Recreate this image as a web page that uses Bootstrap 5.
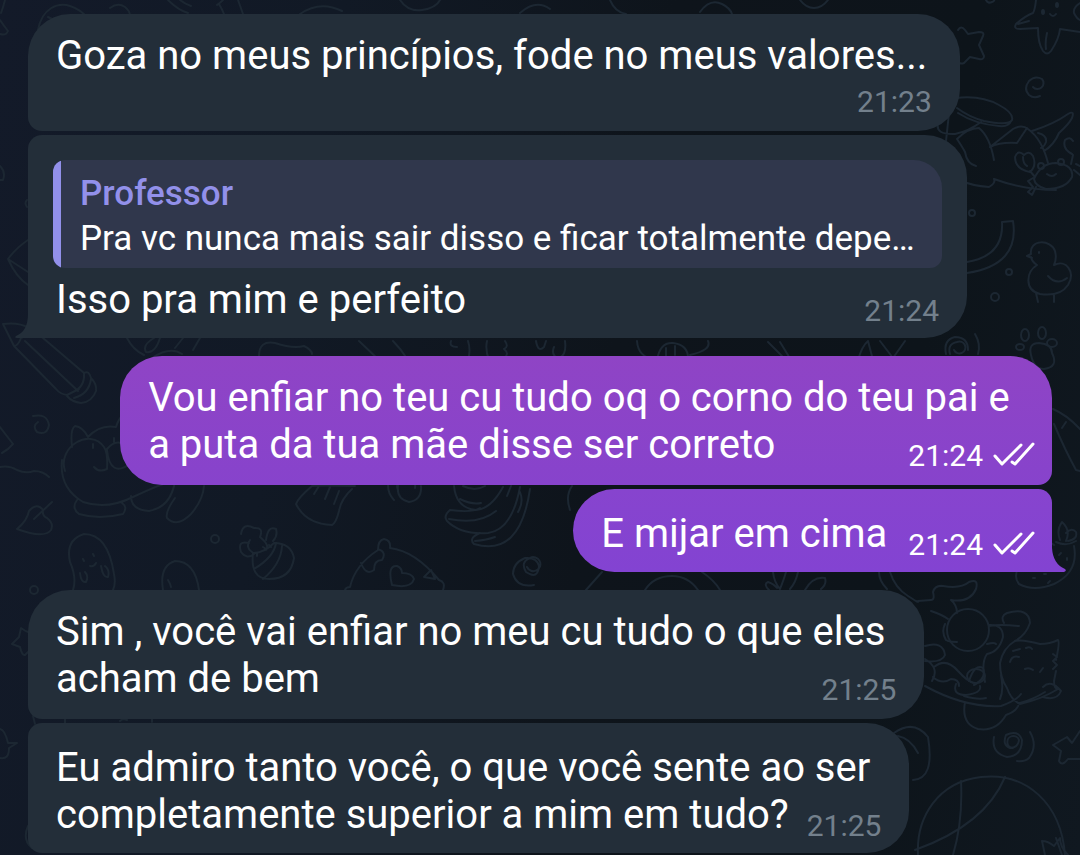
<!DOCTYPE html>
<html lang="pt-BR">
<head>
<meta charset="utf-8">
<meta name="viewport" content="width=device-width, initial-scale=1">
<title>Chat</title>
<link rel="stylesheet" href="https://cdn.jsdelivr.net/npm/bootstrap@5.3.0/dist/css/bootstrap.min.css">
<style>
body{background:linear-gradient(100deg,#131a29 0%,#111925 28%,#0e141b 55%,#0d141a 80%,#101820 100%);font-family:Roboto,"Noto Sans",sans-serif;color:#fff;font-size:40px;line-height:47px;overflow-x:hidden}
.chat{padding:14px 28px 2px}
.doodles{inset:0;z-index:0;stroke:#1c2732;stroke-width:2;fill:none;stroke-linecap:round;stroke-linejoin:round}
.bubble{z-index:1;padding:18px 28px 17px;border-radius:42px;background:#232e39}
.msg-in{border-bottom-left-radius:14px}
.msg-in.follow{border-top-left-radius:14px}
.msg-out{background:linear-gradient(#8f44c5,#8743cc);padding-right:17px;border-bottom-right-radius:14px}
.msg-out.follow{background:linear-gradient(#8744ce,#8343d2);border-top-right-radius:14px}
.low{padding-top:21px;padding-bottom:15px}
.tailed{padding-bottom:15px}
.msg-in.tailed{border-bottom-left-radius:0}
.msg-out.tailed{border-bottom-right-radius:0}
.wide{min-width:91%}
.wider{min-width:91.7%}
.near{margin-top:4px}
.apart{margin-top:18px}
.stamp{font-size:30px;line-height:35px;color:#73808c;margin:17px 0 -5px 18px}
.msg-out .stamp{color:#fff;margin-left:21px}
.stamp.own-line{margin-top:5px}
.line-end{padding-right:11px}
.msg-out .line-end{padding-right:21px}
.ticks{width:42px;height:24px;margin-left:10px;vertical-align:baseline;fill:none;stroke:#fff;stroke-width:3;stroke-linecap:round;stroke-linejoin:round}
.quote{margin:7px -3px 8px;background:#30374c;border-radius:12px 28px 12px 12px;padding:11px 22px 7px 27px;font-size:35px;line-height:45px}
.quote::before{content:"";position:absolute;left:0;top:0;bottom:0;width:8px;background:#9290ea}
.quote-name{color:#9290ea}
.tail{bottom:0;width:14px;height:24px}
.tail-l{left:-13px;fill:#232e39}
.tail-r{right:-14px;fill:#8343d2}
</style>
</head>
<body>
<div class="position-relative min-vh-100">
<svg class="doodles position-absolute w-100 h-100" viewBox="0 0 1080 855" preserveAspectRatio="xMidYMid slice" aria-hidden="true">
<!-- top edge -->
<path d="M0 20q4 6 8 11q-2 5-8 3M1 13q2-5 4-13M38 30C42 8 58 2 70 6q12 4 17 12M48 17l6 3M110 8q8-6 15-1q5 4 5 9M168 0q10 10 20 13M180 0q5 4 11 6M217 5q4-3 6-5M219 4q3 5 5 10M238 0l5 14"/>
<path d="M300 14q20-14 42-3M400 0q8 12 22 10q14-2 18-10M520 13q16-14 30-4M610 0q5 12 16 14M700 12q10-14 22-8q8 4 10 10M800 0q6 8 14 8t14-8"/>
<path d="M986 0q2 4 6 2q3-1 2-3"/>
<!-- starfish -->
<path d="M1036 0q-1 10-3 13q-8 3-17 11q-3 5 4 5l18-1q0 16 5 23q4 5 8 0q8-12 9-22l20 3M1018 24l11-3M1047 33q-2 9-1 16M1080 3q-7 4-6 10q3 6 6 7M1050 14q3 4 6 0"/>
<ellipse cx="1043" cy="12" rx="1" ry="2"/><ellipse cx="1057" cy="5" rx="1" ry="2"/>
<path d="M958 30q3-5 7 0l3 4l11-2q6 0 4 4l-4 9l5 11q0 4-5 3l-9-2l-6 6q-5 2-6-3l-1-11"/>
<path d="M1033 87a6 6 0 1 0 9-8q-7-4-13 2q-6 8 0 14q5 4 11 1"/>
<!-- parrot and crab -->
<path d="M956 98q25-3 43 7q15 8 13 15q-3 6-28 1q-15-4-27-13M1011 121q-2 6-12 5q-24-2-41-13M950 104l-4 37M938 123q-3 12 17 11q14-3 26-12M957 139q11-11 22-11q11 9 15 32M957 139q6 9 8 13q2 12 11 14M990 147l23-18q9-5 15 0q14 10 20 34M990 147q10-5 27-4l10-15M1032 131q22-7 36-17q7-4 4 4q-3 6-13 15q-5 12-15 18M1038 133q9 2 8 9q-2 5-5 6M960 180q12 6 29 7q7-4 5-8q30 11 62 11"/>
<path d="M1034 179q7-16 22-16q18 2 16 14q-6 12-26 12q-11-3-12-10zM1047 174q5 4 9 0M1030 172q-15-3-15-15q3-8 9-2q5-5 9 1q4 10-3 16zM1023 157q0 7 4 9M1072 154q-10-5-7-14q5-4 8 1M1073 155l-2 9M1030 171l5 6M1033 178l-5 3l5 6l-5 5l4 3l4-8M1076 164l4 2M1074 170l6 5"/>
<circle cx="1041" cy="166" r="3"/><circle cx="1061" cy="162" r="3"/>
<!-- rainbow, chick, paw -->
<circle cx="972" cy="213" r="3"/><circle cx="1009" cy="272" r="3"/><circle cx="995" cy="297" r="4"/>
<path d="M967 262q37-6 35-40l11-1q7 44-46 52M1031 254c-2-15 20-15 24-3q2 8-1 14c12-6 22 7 14 20q-8 12-28 9c-16-4-14-22-3-29q-5-3-6-8M1031 254l-4 2l5 2M1048 276q9 10 19 2M1036 293l2 9M1054 295v7M1039 252v1"/>
<path d="M1031 355q-3-12 8-12q13 1 13 10q7 14-8 16q-10 0-13-14z"/>
<ellipse cx="1025" cy="335" rx="4" ry="6"/><ellipse cx="1042" cy="333" rx="4" ry="6"/><ellipse cx="1052" cy="343" rx="5" ry="4"/><ellipse cx="1020" cy="347" rx="4" ry="3"/>
<path d="M954 350a6 6 0 1 0 3-8q-10 2-7 12M975 334q6 10 3 20M946 354q-3-14 9-17q13 0 13 13"/>
<!-- left side -->
<path d="M0 166q6 6 3 14H0M28 240q-12 8-20 19q8 18 20 26M8 259l20 13M27 200q-3 3 0 7"/>
<path d="M3 324l11 22l42 43q4 5 11 6l12-6M3 324q16-2 26 4l14 10l41 35M14 346q4 0 7-8q5-2 8-8M25 341l53 50M84 373q5-3 7 5q6 6 5 13q-4 11-15 12q-9-1-14-7M84 373q1 14-11 19M91 379q-2 15-17 19"/>
<path d="M33 416q14-3 16 9q-2 11-12 7q-5-6 1-10M0 427l13 17q-5 6-11 9M0 467q9-2 17 3q9 4 17 1q9 0 15 6"/>
<path d="M72 447q-2-18 3-21q8 1 13 11q12-13 28-10q3-10 9-13M65 471c-8-24 25-44 39-24q4 6 3 22q-8 4-13-2M107 449q12-14 22 2M107 450q3 28 23 14M93 444v4M114 438v4M62 460q-3 28 21 42q24 8 50-5q30-14 40-16M77 500q-6 8 2 14q20 6 44 0q5-7-1-11M131 496q0 14 18 15q22-4 26-30M175 498q-10 14-8 20q10 10 24-4q12-14 13-28"/>
<path d="M17 529q10-8 12-18q8-9 14-1q-1 6 4 8q7 5 4 12q-7 9-34-1M34 519l18-17M73 590q4-12-3-28q-5-22 14-28q24 0 30 40q2 10-1 16M83 559l1 2M93 554l1 2M90 566q4 1 6-3M80 573q1 10 6 9q3-6-1-10M101 566q2 12 7 11q2-7-3-11M163 590q-4-24 12-29q20 0 24 29M168 580q2 3 3 7"/>
<circle cx="34" cy="590" r="4"/><circle cx="215" cy="539" r="4"/>
<path d="M28 632q-3-1-7-4l-2 9l-7 7l8 3q2 9 5 8l3-3M0 729q5 1 8 14l9 0l-8 5q0 12-9 10M28 826q-6 14 4 22M33 716l2 8M65 718v5M120 721q3-3 7-1M152 718v4"/>
<!-- gap below the quoted message -->
<path d="M127 338q6 12 17 17M160 338q-5 16-14 14q-4-7 8-14M175 348l8-10M200 338l-7 12M182 354q-12-8-30 4M259 356q0-16 16-13q18 6 29 3q8 4 8 8M359 341l20 19M393 341q8 8 15 19M451 341q-2 6 6 6M468 341q3 9 0 19M487 341q-2 9 2 19M505 341q4 6-1 8q6 5 0 9M536 341q2 12 8 6l2-6M565 341q2 16-8 17q-6-4-3-11M637 341q1 16 18 19M657 360q3-18 16-17q16 2 15 17M666 348v9M675 346v9M708 341q4 9-18 14M768 342l18 18M780 342l11 18M858 360q4-14 10-19l5 19M880 341l13 17l12-17"/>
<!-- right of outgoing bubbles -->
<path d="M1053 409q14 6 27 20M1054 424q11 26 22 46l4 1M1062 428l4-6M1054 545q-6-5-9 5M1060 540q-4-10 2-18q9 8 4 19M1066 533q6-6 10-1q2 7-8 9M1056 542q10 5 20-1M1074 546q5 26-20 38q-20 8-35 0q-6-7 0-18"/>
<path d="M1033 578h2M1044 574h2M1059 555l2-2M1067 560v-2M1048 583l2-2"/>
<!-- gap with fruit and fish -->
<path d="M355 486q-33-1-43 0q-14 12-16 18q10 20 36 21q4-2 7-14q2-12 13-22M319 486l-5 8M330 487l-5 12M339 491l-5 13M241 534q2-12 13-6q10-1 6 9q10 8 6 13M266 540q2-15 10-11q2 7-3 12M250 540q-5 7 2 12M249 543q-12-3-8 9q6 8 13 2M253 553q-3 26 16 26q22 0 25-21q-3-15-20-15q-10 10-21 10M254 569q20-12 22-26M263 579q18-15 19-33M257 553v3M263 547l3 2M269 545l2 2"/>
<path d="M388 485q0 9 6 15M398 490a9 9 0 1 1 17-2M398 485q-2 14 11 17q13-2 12-16M454 486q2 22 22 24q15-1 27-23M450 510q-7 6-3 11q14 14 41 12q24-3 32-46M450 510q22 3 30-2M449 519q30 6 47-8M460 499q12 6 21 4M463 486q12 6 22 0M507 496l4-10M480 533q-12 5-6 11q46 14 56-55M475 541q12-1 20-4M518 512q6-10 2-20"/>
<path d="M345 590q1-3 5-3q5-22 28-37q0-10 6-11q7 1 6 9q25 3 49 32q7 2 4 10M361 563q5 13 13 7q0-10 8-10q5-8-4-11M392 585q-5-20 5-19q5 2 5 7q10 0 12 6q-3 10-22 6zM424 577l7-7l4 9zM527 567a7 7 0 1 0 3-9q-10 4-4 14q12 8 13-6q-2-9-14-8q-12 5-12 16q4 14 21 11M570 510q-5-14 2-24M586 590l16-18M645 590q9-14 27-14q16 0 26 14M702 572q12 8 18 18M769 590q-6-6-1-8q6 2 9 6M773 572q1 10 7 17q4-10 6-17M798 572q-2 10-8 17M805 590q8-14 20-12q2 6-4 11M879 572q0 9 8 17M890 572q5 16 18 24q12 8 10 5l13-1q4 0 2-8q2-7 10-6q18 3 26-4q10-4 7 7q-6 14-25 11q6 5 6 13"/>
<!-- cat with ball -->
<circle cx="968" cy="630" r="21"/>
<path d="M931 611q12 4 17 8M945 638q0 4 12 4M945 624q-4 8 1 16M989 625q14-1 14 12q-4 15-16 17q-6 8-2 28M987 644q8-2 9 0M989 626q10-2 30 0M1004 623q-4-7 3-10q22-6 23 10q-4 12-15 18M1015 641q7-2 25 3q10 0 18-4q2 2-2 20M1053 654l4 3l-4 4l4 4l-4 4M1015 641q-12 7-15 22q0 15 7 25q4 12 13 16q22-5 38-15q-4 0-4-8l2-10M1020 703q14-4 25-11M1043 687q8-8 18 4q-4 10-18 6M925 646c12-4 19 0 20 9q-3 8-20 6M925 659q15 9 7 22M934 667q12-10 24 4q10 11 16 12M933 677q9 8 18 2q8 0 8 7M925 686q40 22 76 20q16-6 20-12M956 684q-4 11 10 11q16-2 14-9M964 696q14 4 22 2M965 702q-4 22 13 27q18 3 28-14q12-4 13-12M1001 675q3 15-1 24M1010 662q2-7 9-5M1013 651l7-2M1026 648q4-2 6 1M1025 669q4-2 8 1M1040 672l3-4"/>
<ellipse cx="976" cy="676" rx="9" ry="7"/><path d="M969 681q6-18 14-13q4 10-9 17"/>
<path d="M894 733q20-14 34 4q7 42-15 43M898 736q12 2 20 17M1013 748a6 6 0 1 1 6-8q-1 8-9 8q-8-3-4-13q12-6 16 5q0 16-15 17q-16-4-13-20M1030 732q8 14-1 26q-4 4-12 3M1080 731l-8 12l-5-6l-14 8l8 6l-2 10q3 6 9-2l12 0"/>
<path d="M918 855c-2-38 20-73 63-78c45-5 80 26 84 78M961 781q2 40-8 74M1005 777q-20 48-90 73M1045 855l-3-14q6 0 12 5l6-8q0 9 8 17M1056 838l6 17"/>
</svg>
<main class="chat d-flex flex-column align-items-start">
<article class="bubble msg-in wide position-relative">Goza no meus princípios, fode no meus valores...<time class="stamp own-line d-block text-end">21:23</time></article>
<article class="bubble msg-in follow tailed wider near position-relative">
<blockquote class="quote position-relative overflow-hidden"><div class="quote-name fw-medium">Professor</div><div>Pra vc nunca mais sair disso e ficar totalmente depe…</div></blockquote>
Isso pra mim e perfeito<time class="stamp float-end">21:24</time>
<svg class="tail tail-l position-absolute" viewBox="0 0 14 24" aria-hidden="true"><path d="M14 0h-1Q13 17 1 22q-2 2 1 2h12z"/></svg>
</article>
<article class="bubble msg-out wide apart align-self-end position-relative"><span class="line-end">Vou enfiar no teu cu tudo oq o corno do teu pai e</span><br>a puta da tua mãe disse ser correto<time class="stamp float-end">21:24<svg class="ticks" viewBox="0 0 42 24" role="img" aria-label="Lida"><path d="M2 14l7 8L28 3M19 20l3 2L40 2"/></svg></time></article>
<article class="bubble msg-out follow low tailed near align-self-end position-relative">E mijar em cima<time class="stamp float-end">21:24<svg class="ticks" viewBox="0 0 42 24" role="img" aria-label="Lida"><path d="M2 14l7 8L28 3M19 20l3 2L40 2"/></svg></time>
<svg class="tail tail-r position-absolute" viewBox="0 0 14 24" aria-hidden="true"><path d="M0 0Q1 16 13 21q2 2-1 3H0z"/></svg>
</article>
<article class="bubble msg-in apart position-relative"><span class="line-end">Sim , você vai enfiar no meu cu tudo o que eles</span><br>acham de bem<time class="stamp float-end">21:25</time></article>
<article class="bubble msg-in follow low near position-relative"><span class="line-end">Eu admiro tanto você, o que você sente ao ser</span><br>completamente superior a mim em tudo?<time class="stamp float-end">21:25</time></article>
</main>
</div>
<script src="https://cdn.jsdelivr.net/npm/bootstrap@5.3.0/dist/js/bootstrap.bundle.min.js"></script>
</body>
</html>
